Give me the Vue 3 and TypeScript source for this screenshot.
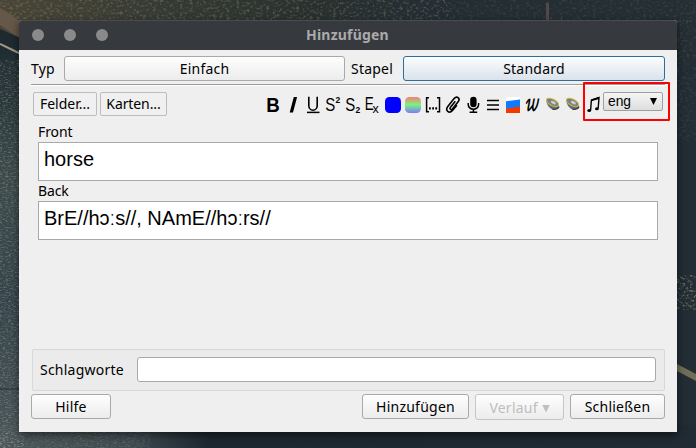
<script setup lang="ts">
import { ref } from 'vue'

interface Field {
  name: string
  value: string
}

const fields = ref<Field[]>([
  { name: 'Front', value: 'horse' },
  { name: 'Back', value: 'BrE//hɔːs//, NAmE//hɔːrs//' },
])
const tags = ref('')
const language = ref('eng')
</script>

<template>
  <div class="desktop">
    <svg class="wallpaper" viewBox="0 0 696 448" aria-hidden="true">
      <defs>
        <linearGradient id="sky" x1="0" y1="0" x2="1" y2="0">
          <stop offset="0" stop-color="#494537" />
          <stop offset=".2" stop-color="#383b34" />
          <stop offset=".45" stop-color="#28302f" />
          <stop offset=".65" stop-color="#232d34" />
          <stop offset="1" stop-color="#242e34" />
        </linearGradient>
        <linearGradient id="road" x1="0" y1="0" x2="0" y2="1">
          <stop offset="0" stop-color="#1c282e" />
          <stop offset=".2" stop-color="#2c3a3c" />
          <stop offset=".35" stop-color="#3c4a4a" />
          <stop offset=".65" stop-color="#35434a" />
          <stop offset="1" stop-color="#4a5658" />
        </linearGradient>
        <linearGradient id="bottom" x1="0" y1="0" x2="1" y2="0">
          <stop offset="0" stop-color="#4a5658" />
          <stop offset=".19" stop-color="#3e4a4e" />
          <stop offset=".3" stop-color="#1d2831" />
          <stop offset="1" stop-color="#202b34" />
        </linearGradient>
        <filter id="grain" x="0" y="0" width="100%" height="100%">
          <feTurbulence type="fractalNoise" baseFrequency=".35 .8" numOctaves="3" seed="4" />
          <feColorMatrix values="0 0 0 0 .75  0 0 0 0 .75  0 0 0 0 .65  1.8 0 0 0 -.82" />
        </filter>
        <filter id="leaves" x="0" y="0" width="100%" height="100%">
          <feTurbulence type="fractalNoise" baseFrequency=".3 .4" numOctaves="3" seed="9" />
          <feColorMatrix values="0 0 0 0 .5  0 0 0 0 .48  0 0 0 0 .25  2 0 0 0 -1" />
        </filter>
      </defs>
      <rect width="696" height="448" fill="#222d35" />
      <rect width="696" height="60" fill="url(#sky)" />
      <rect width="450" height="24" filter="url(#leaves)" opacity=".45" />
      <rect x="450" width="246" height="24" filter="url(#leaves)" opacity=".2" />
      <path d="M0 8 Q12 14 19 21 V38 L0 25Z" fill="#655848" />
      <path d="M0 29 L25 40 V448 H0Z" fill="url(#road)" />
      <path d="M0 44 L25 56" stroke="#a09a82" stroke-width="2" />
      <rect y="425" width="696" height="23" fill="url(#bottom)" />
      <rect y="60" width="24" height="388" filter="url(#grain)" opacity=".4" />
      <rect y="432" width="150" height="16" filter="url(#grain)" opacity=".25" />
      <rect x="677" y="20" width="19" height="120" filter="url(#leaves)" opacity=".2" />
      <rect x="677" y="275" width="19" height="35" filter="url(#leaves)" opacity=".8" />
      <path d="M675 363 L698 375 V382 L675 370Z" fill="#716e57" />
      <path d="M546 3h3v17h-3z" fill="#54484a" />
      <path d="M0 389h20" stroke="#202c32" />
    </svg>

    <main class="window">
      <header class="titlebar">
        <div class="lights"><i></i><i></i><i></i></div>
        <h1><span>Hinzufügen</span></h1>
      </header>

      <section class="chooser">
        <label class="typ">Typ</label>
        <button class="btn type-btn">Einfach</button>
        <label class="stapel">Stapel</label>
        <button class="btn deck-btn">Standard</button>
      </section>
      <div class="rule"></div>

      <section class="toolbar">
        <button class="flat felder">Felder...</button>
        <button class="flat karten">Karten...</button>
        <div class="icons">
          <svg viewBox="0 0 20 20"><text x="3.2" y="17.3" class="gl bold" font-size="20.500" textLength="13.500" lengthAdjust="spacingAndGlyphs">B</text></svg>
          <svg viewBox="0 0 20 20"><path d="M10.800 2h3.300L10 17.500H6.700z" /></svg>
          <svg viewBox="0 0 20 20"><path d="M5.800 1.800v8.700a4.200 4.700 0 0 0 8.400 0V1.800" class="ln" stroke-width="1.600" /><path d="M4 17.400h12.500" class="ln" stroke-width="1.500" /></svg>
          <svg viewBox="0 0 20 20"><text x="2.300" y="16.200" class="gl" font-size="18.500"><tspan textLength="10" lengthAdjust="spacingAndGlyphs">S</tspan><tspan x="12.500" y="8" class="bold" font-size="8.500">2</tspan></text></svg>
          <svg viewBox="0 0 20 20"><text x="2.300" y="15.700" class="gl" font-size="18.500"><tspan textLength="10" lengthAdjust="spacingAndGlyphs">S</tspan><tspan x="12.500" y="17.800" class="bold" font-size="8.500">2</tspan></text></svg>
          <svg viewBox="0 0 20 20"><text x="1.800" y="14.800" class="gl" font-size="18"><tspan textLength="9" lengthAdjust="spacingAndGlyphs">E</tspan><tspan x="9.500" y="17.800" font-size="12.500">x</tspan></text></svg>
          <svg viewBox="0 0 20 20"><rect x="2" y="2" width="16" height="16" rx="4.500" fill="#00f" /></svg>
          <svg viewBox="0 0 20 20">
            <defs>
              <linearGradient id="spectrum" x1="0" y1="0" x2="0" y2="1">
                <stop offset="0" stop-color="#fa7b7b" />
                <stop offset=".48" stop-color="#7bf37d" />
                <stop offset="1" stop-color="#7b7bfb" />
              </linearGradient>
            </defs>
            <rect x="2" y="2" width="16" height="16" rx="4.500" fill="url(#spectrum)" />
          </svg>
          <svg viewBox="0 0 20 20"><path d="M6 2.700H3.600v14H6M14 2.700h2.500v14H14" class="ln" stroke-width="1.500" /><path d="M6 12.200h1.800v2.200H6zM9.200 12.200H11v2.200H9.200zM12.300 12.200h1.800v2.200h-1.800z" /></svg>
          <svg viewBox="0 0 20 20"><path d="M12.300 6.300L7.300 12.500c-1 1.600.8 3 2.100 1.500l5.900-7.400c2.300-3.500-1.500-6.100-4.200-3L4.800 11.400c-3 4.300 1.300 7.700 4.700 4.100l4.400-5.200" class="ln" stroke-width="1.600" /></svg>
          <svg viewBox="0 0 20 20"><rect x="7.200" y="1.800" width="6.400" height="10.500" rx="3.200" /><path d="M5.200 8v1.600a5.200 4.600 0 0 0 10.400 0V8M10.400 14v3.400M6.600 17.300h7.600" class="ln" stroke-width="1.500" /></svg>
          <svg viewBox="0 0 20 20"><path d="M4 5.500h12M4 10h12M4 14.500h12" class="ln" stroke-width="1.600" /></svg>
          <svg viewBox="0 0 20 20"><path d="M3 2h14v5H3z" fill="#fff" /><path d="M3 6.200L17 4.600v8L3 14z" fill="#0d7bff" /><path d="M3 13.500l14-2V18H3z" fill="#f43900" /></svg>
          <svg viewBox="0 0 20 20"><text x="2" y="15.800" class="script" font-size="22" textLength="15" lengthAdjust="spacingAndGlyphs">𝓌</text></svg>
          <svg v-for="n in 2" :key="n" viewBox="0 0 20 20">
            <path d="M3.300 5.500c.4 4 3 8.300 6.500 8.900 3 .5 6.400-.8 6.600-3.500z" fill="#68686d" />
            <path d="M9.500 14.300c3 .4 5.500-.6 6.500-2.300" class="shade" />
            <ellipse cx="9.500" cy="7.400" rx="6.600" ry="3.200" transform="rotate(28 9.500 7.400)" fill="#7d8088" stroke="#cabd38" stroke-width="1.100" />
            <ellipse cx="10.300" cy="7.600" rx="2.800" ry="1.400" transform="rotate(28 10.300 7.600)" fill="#c9cbda" />
          </svg>
          <svg viewBox="0 0 20 20"><path d="M7.600 15.500L8.400 5l7.600-2.400-.8 10.700" class="ln" stroke-width="1.400" /><path d="M8.400 4.400L16 2v1.900L8.300 6.300z" /><ellipse cx="6.200" cy="15.600" rx="1.900" ry="1.500" /><ellipse cx="13.900" cy="13.700" rx="1.900" ry="1.500" /></svg>
        </div>
        <div class="language"><span>{{ language }}</span><svg viewBox="0 0 8 8"><path d="M0 0h7L3.500 7z" /></svg></div>
        <div class="highlight"></div>
      </section>

      <section class="fields">
        <div v-for="field in fields" :key="field.name" class="field">
          <label>{{ field.name }}</label>
          <div class="value" contenteditable="true">{{ field.value }}</div>
        </div>
      </section>

      <section class="tags">
        <label>Schlagworte</label>
        <input v-model="tags" type="text" />
      </section>

      <footer class="actions">
        <button class="btn help">Hilfe</button>
        <button class="btn add">Hinzufügen</button>
        <button class="btn history" disabled>Verlauf&nbsp;<svg viewBox="0 0 8 8"><path d="M.3 0h7.400L4 7.500z" /></svg></button>
        <button class="btn close">Schließen</button>
      </footer>
    </main>
  </div>
</template>

<style>
body {
  overflow: hidden;
}
</style>

<style scoped>
* {
  box-sizing: border-box;
}
.desktop {
  position: relative;
  width: 696px;
  height: 448px;
  padding: 20px 19px 16px;
  overflow: hidden;
  font: 14px/20px 'Noto Sans', 'Open Sans', sans-serif;
  color: #000;
}
.wallpaper {
  position: absolute;
  inset: 0;
  width: 696px;
  height: 448px;
}
.window {
  position: relative;
  display: flex;
  flex-direction: column;
  width: 658px;
  height: 412px;
  background: #efefef;
  border-radius: 3px 3px 0 0;
  box-shadow: 0 3px 9px rgba(0, 0, 0, 0.55);
}
.titlebar {
  display: flex;
  align-items: center;
  flex: none;
  height: 30px;
  padding: 0 0 1px 13px;
  background: #36393e;
  border-top: 1px solid #4c4b50;
  border-radius: 3px 3px 0 0;
}
.lights {
  display: flex;
  gap: 20px;
}
.lights i {
  width: 12px;
  height: 12px;
  border-radius: 50%;
  background: #8a8a8a;
}
h1 {
  flex: 1;
  margin: 0 90px 0 0;
  text-align: center;
  color: #aaaaab;
  font-size: 14px;
  font-weight: 700;
  line-height: 20px;
  letter-spacing: 0.2px;
}
button {
  margin: 0;
  padding: 0;
  font: inherit;
  color: inherit;
}
.btn {
  height: 25px;
  border: 1px solid #a9a9a9;
  border-radius: 3px;
  background: linear-gradient(#fefefe, #ececec);
  line-height: 23px;
}
.btn,
.chooser label,
.tags label {
  letter-spacing: 0.23px;
}
.chooser {
  display: flex;
  align-items: center;
  flex: none;
  height: 25px;
  margin: 6px 12px 0;
}
.typ {
  width: 33px;
}
.type-btn {
  width: 281px;
}
.stapel {
  width: 58px;
  padding-left: 6px;
}
.deck-btn {
  width: 262px;
  border-color: #2d6e9f;
  background: linear-gradient(#fcfdfe, #d9e2eb);
}
.rule {
  flex: none;
  height: 2px;
  margin: 3px 12px 0;
  border-top: 1px solid #9b9b9b;
  border-bottom: 1px solid #fff;
}
.toolbar {
  position: relative;
  display: flex;
  align-items: flex-start;
  flex: none;
  height: 36px;
  padding: 6px 14px 0;
}
.flat {
  height: 24px;
  border: 1px solid #bcbcbc;
  border-radius: 2px;
  background: #f0f0f0;
  line-height: 22px;
}
.felder {
  width: 64px;
}
.karten {
  width: 67px;
  margin-left: 3px;
  letter-spacing: -0.1px;
}
.icons {
  display: flex;
  margin: 3px 0 0 96px;
}
.icons svg {
  width: 20px;
  height: 20px;
  overflow: visible;
}
.ln {
  fill: none;
  stroke: #000;
}
.shade {
  fill: none;
  stroke: #3d3d42;
  stroke-width: 1.2;
}
.gl {
  font-family: 'Liberation Sans', sans-serif;
}
.bold {
  font-weight: 700;
}
.script {
  font-family: 'DejaVu Math TeX Gyre', 'DejaVu Serif', serif;
  font-weight: 700;
}
.language {
  display: flex;
  align-items: center;
  justify-content: space-between;
  flex: none;
  width: 60px;
  height: 19px;
  padding: 0 4px;
  border: 1px solid #a0a0a0;
  border-radius: 2px;
  background: linear-gradient(#f5f5f5, #dedede);
  font: 13.8px/17px 'Liberation Sans', sans-serif;
}
.language svg {
  width: 8px;
  height: 8px;
}
.highlight {
  position: absolute;
  top: -4px;
  left: 564px;
  width: 87px;
  height: 39px;
  border: 2px solid #f00;
  border-radius: 1px;
}
.fields {
  flex: 1;
  padding: 0 19px;
}
.field {
  height: 59px;
}
.field label {
  display: block;
  height: 20px;
  line-height: 20px;
  letter-spacing: -0.1px;
}
.value {
  height: 39px;
  padding: 4px 5px 0;
  border: 1px solid #a9a9a9;
  background: #fff;
  font: 20px/24px 'Liberation Sans', sans-serif;
}
.tags {
  display: flex;
  align-items: center;
  flex: none;
  height: 42px;
  margin: 0 12px 0 13px;
  padding: 0 8px 1px 7px;
  border: 1px solid #d8d8d8;
  border-radius: 2px;
  background: #ebebeb;
}
.tags label {
  width: 97px;
}
.tags input {
  width: 519px;
  height: 25px;
  border: 1px solid #a9a9a9;
  border-radius: 3px;
  outline: 0;
  background: #fff;
}
.actions {
  display: flex;
  flex: none;
  height: 41px;
  padding: 3px 12px 0;
}
.help {
  width: 80px;
}
.add {
  width: 107px;
  margin-left: 251px;
}
.history {
  width: 89px;
  height: 26px;
  margin-left: 6px;
  border-color: #c6c6c6;
  color: #bebebe;
}
.history svg {
  width: 8px;
  height: 8px;
  fill: #bebebe;
}
.close {
  width: 95px;
  margin-left: 6px;
}
</style>
